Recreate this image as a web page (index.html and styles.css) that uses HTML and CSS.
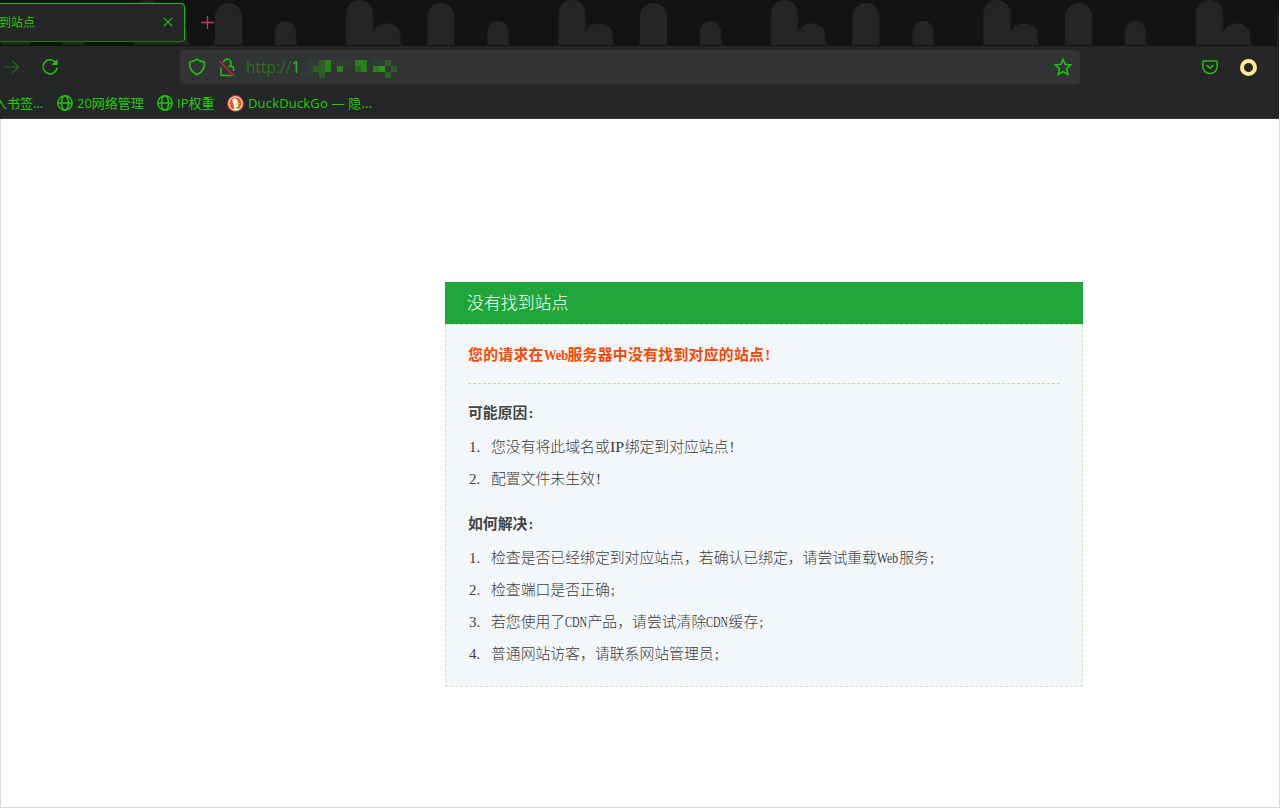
FILE: index.html
```html
<!DOCTYPE html>
<html lang="zh-CN">
<head>
    <meta charset="UTF-8">
    <title>没有找到站点</title>
    <link rel="stylesheet" href="styles.css">
</head>
<body>
    <div class="browser">
        <div class="tabs">
            <svg class="skyline" width="1279" height="46">
                <defs>
                    <pattern id="hills" x="210" width="212.5" height="46" patternUnits="userSpaceOnUse">
                        <path d="M4 45 Q5 43 5 38 V17 a13.5 14 0 0 1 27 0 V45z M65 45 V32 a10.5 11 0 0 1 21 0 V38 Q86 43 87 45z M136 45 V14 a13.5 14 0 0 1 27 0 V33 a13.5 11 0 0 1 27 3 Q190 42 192 45z"/>
                    </pattern>
                </defs>
                <rect width="1279" height="46" fill="url(#hills)"/>
            </svg>
            <div class="tab">
                <span class="tab-title">到站点</span>
                <svg width="10" height="10" viewBox="0 0 10 10"><path d="M.8.8l8.400 8.400M9.200.8L.8 9.200"/></svg>
            </div>
            <svg class="new-tab" width="13" height="13" viewBox="0 0 13 13"><path d="M6.500 0v13M0 6.500h13"/></svg>
        </div>

        <div class="toolbar">
            <svg class="forward" width="18" height="16" viewBox="0 0 18 16"><path d="M1 8h15M9.500 2l6 6-6 6"/></svg>
            <svg class="reload" width="18" height="18" viewBox="0 0 18 18"><path d="M14.500 4.500A7 7 0 1 0 16 9.500"/><path class="solid" d="M16.500 1v6h-6z"/></svg>
            <div class="urlbar">
                <svg width="18" height="18" viewBox="0 0 18 18"><path d="M9 1.200Q12 3.500 16.500 4.200Q17 13 9 16.800Q1 13 1.500 4.200Q6 3.500 9 1.200z"/></svg>
                <svg class="lock" width="18" height="19" viewBox="0 0 18 19"><path d="M5.500 4.500a3.700 3.500 0 0 1 7.400 0.500v3.500M10 8.500h4q1.500 0 1.500 1.500v3M3 9.500v6.500q0 1.500 1.500 1.500h9"/><path class="strike" d="M1.500 3l14.500 15"/></svg>
                <span class="url">http://<b>1</b></span>
                <svg class="mosaic" width="102" height="18" viewBox="0 0 102 18">
                    <path fill="#323c32" d="M6 0h12v6H6z M6 6h6v6H6z M0 12h12v6H0z M30 0h24v6H30z M72 0h12v6H72z"/>
                    <path fill="#2c6024" d="M18 0h6v6h-6z M12 6h12v6H12z M18 12h6v6h-6z M54 6h6v6h-6z M84 0h6v6h-6z M90 6h6v6h-6z M84 12h6v6h-6z"/>
                    <path fill="#29801c" d="M24 0h6v12h-6z M36 6h6v6h-6z M54 0h12v6H54z M60 6h6v6h-6z M72 6h6v6h-6z"/>
                    <path fill="#249b17" d="M78 6h6v6h-6z"/>
                </svg>
                <svg class="star" width="18" height="18" viewBox="0 0 18 18"><path d="M9 1.200l2.200 5 5.600.6-4.200 3.800 1.200 5.900L9 13.700l-4.800 2.800 1.200-5.900L1.200 6.800l5.600-.6z"/></svg>
            </div>
            <svg class="pocket" width="16" height="15" viewBox="0 0 16 15"><path d="M2 1h12q1.200 0 1.200 1.200V6.500a7.200 7 0 0 1-14.400 0V2.200Q.8 1 2 1zM4.500 5L8 8.300 11.500 5"/></svg>
            <span class="ring"></span>
        </div>

        <div class="bookmarks">
            <span class="bookmark clipped">入书签...</span>
            <span class="bookmark globe-item">
                <svg width="16" height="16" viewBox="0 0 16 16"><circle cx="8" cy="8" r="7.200"/><ellipse cx="8" cy="8" rx="3.500" ry="7.200"/><path d="M1 8h14"/></svg>
                20网络管理
            </span>
            <span class="bookmark globe-item">
                <svg width="16" height="16" viewBox="0 0 16 16"><circle cx="8" cy="8" r="7.200"/><ellipse cx="8" cy="8" rx="3.500" ry="7.200"/><path d="M1 8h14"/></svg>
                IP权重
            </span>
            <span class="bookmark duck-item">
                <svg class="duck" width="17" height="17" viewBox="0 0 17 17">
                    <circle cx="8.500" cy="8.500" r="8.300" fill="#de5833"/>
                    <circle cx="8.500" cy="8.500" r="6.600" fill="#de5833" stroke="#fff" stroke-width="1"/>
                    <path fill="#fff" d="M5.500 4Q9 2.500 10.500 5.500Q11 7 11 10L11.500 14.500Q9 15.500 7.500 14.500Q7 10 5.700 7z"/>
                    <path fill="#fdd20a" d="M9 8.300l4-.5-.5 1.500L9 10z"/>
                    <path fill="#65bc46" d="M8.500 12l4-1v3l-4-.7z"/>
                </svg>
                DuckDuckGo — 隐...
            </span>
        </div>
    </div>

    <div class="page">
        <div class="box">
            <h1>没有找到站点</h1>
            <div class="content">
                <p class="warning">您的请求在<span class="web">Web</span>服务器中没有找到对应的站点<span class="half">!</span></p>
                <h2>可能原因<span class="half">:</span></h2>
                <ol>
                    <li>您没有将此域名或<span class="ip">IP</span>绑定到对应站点<span class="half">!</span></li>
                    <li>配置文件未生效<span class="half">!</span></li>
                </ol>
                <h2>如何解决<span class="half">:</span></h2>
                <ol>
                    <li>检查是否已经绑定到对应站点，若确认已绑定，请尝试重载<span class="web">Web</span>服务<span class="half">;</span></li>
                    <li>检查端口是否正确<span class="half">;</span></li>
                    <li>若您使用了<span class="cdn">CDN</span>产品，请尝试清除<span class="cdn">CDN</span>缓存<span class="half">;</span></li>
                    <li>普通网站访客，请联系网站管理员<span class="half">;</span></li>
                </ol>
            </div>
        </div>
    </div>
</body>
</html>
```
FILE: styles.css
```css
* {
    box-sizing: border-box;
}
body {
    margin: 0;
    width: 1280px;
    height: 808px;
    overflow: hidden;
    display: flex;
    flex-direction: column;
    background-color: #fff;
    font-family: "Liberation Serif", "Noto Sans CJK SC", serif;
}
svg {
    display: block;
    flex: none;
    fill: none;
    stroke: #1fc60a;
    stroke-width: 1.5;
}
.browser {
    width: 1279px;
    height: 119px;
    background-color: #252628;
    border-bottom: 1px solid #3b3a3c;
    color: #1fd100;
    font-family: "Open Sans", "Noto Sans CJK SC", sans-serif;
    font-size: 13px;
}
.tabs {
    position: relative;
    display: flex;
    height: 46px;
    background-color: #131313;
}
.skyline {
    position: absolute;
    left: 0;
    top: 0;
    stroke: none;
}
.skyline path {
    fill: #252525;
}
.tab {
    position: relative;
    display: flex;
    align-items: center;
    justify-content: space-between;
    width: 186px;
    height: 39px;
    margin: 3px 0 0 -1px;
    padding: 0 11px 2px 0;
    background-color: #252628;
    border: 1px solid #1fb80a;
    border-bottom: 1px solid #1c7d12;
    border-radius: 0 4px 4px 0;
}
.tab svg {
    stroke-width: 1.2;
}
.tab-title {
    margin-left: -1px;
    font-size: 12px;
}
.new-tab {
    position: relative;
    margin: 16px 0 0 16px;
    stroke: #e8275f;
    stroke-width: 1.3;
}
.toolbar {
    display: flex;
    align-items: center;
    height: 42px;
}
.forward {
    margin-left: 3px;
    stroke: #236d1c;
    stroke-width: 1.2;
}
.reload {
    margin-left: 20px;
}
.reload .solid {
    fill: #1fc60a;
    stroke: none;
}
.urlbar {
    display: flex;
    align-items: center;
    width: 900px;
    height: 34px;
    margin-left: 121px;
    padding: 0 8px;
    background-color: #333436;
    border-radius: 4px;
}
.lock {
    margin-left: 12px;
}
.lock .strike {
    stroke: #d81848;
}
.url {
    margin-left: 10px;
    color: #28761d;
    font-size: 15.5px;
}
.url b {
    color: #1fd100;
    font-weight: 400;
}
.mosaic {
    margin-left: 1px;
    margin-top: 4px;
    stroke: none;
}
.star {
    margin-left: auto;
}
.pocket {
    margin-left: 122px;
}
.ring {
    width: 17px;
    height: 17px;
    margin-left: 22px;
    border: 4px solid #ffeb93;
    border-radius: 50%;
}
.bookmarks {
    display: flex;
    align-items: center;
    height: 29px;
}
.bookmark {
    display: flex;
    align-items: center;
    gap: 4px;
    white-space: nowrap;
}
.bookmark svg {
    margin-top: 1px;
}
.clipped {
    width: 57px;
    margin-left: -6px;
    margin-right: 6px;
}
.globe-item {
    width: 100px;
}
.globe-item + .globe-item {
    width: 70px;
}
.duck-item {
    letter-spacing: .18px;
}
.duck {
    stroke: none;
}
.page {
    flex: 1;
    padding: 163px 0 0 444px;
    border: 1px solid #d8d8d8;
    border-top: 0;
}
.box {
    width: 638px;
    height: 406px;
    color: #3c3c3c;
    font-size: 14.85px;
    font-weight: 300;
}
h1 {
    height: 42px;
    margin: 0;
    padding-left: 22px;
    background-color: #20a53a;
    color: #fff;
    font-size: 16.9px;
    font-weight: 300;
    line-height: 44px;
}
.content {
    height: 363px;
    padding: 15px 22px 0;
    background-color: #f3f7fa;
    border: 1px dashed #d3e2cc;
}
.warning {
    height: 44px;
    margin: 0;
    border-bottom: 1px dashed #cbd9b8;
    color: #ff4500;
    font-weight: 700;
    letter-spacing: .29px;
    line-height: 30px;
}
h2 {
    margin: 14px 0 0;
    color: #444;
    font-size: 14.85px;
    font-weight: 700;
    line-height: 30px;
}
ol {
    margin: 4px 0 0;
    padding-left: 23px;
    list-style: none;
    counter-reset: row;
}
li {
    line-height: 31.7px;
    white-space: nowrap;
}
li::before {
    content: counter(row) ".";
    counter-increment: row;
    display: inline-block;
    width: 22px;
    margin-left: -22px;
}
/* half-width latin, squeezed to the CJK grid */
.web, .cdn, .ip {
    display: inline-block;
    width: 22.3px;
    letter-spacing: 0;
    transform-origin: 0 0;
}
.web {
    transform: scaleX(.78);
}
.warning .web {
    width: 23.8px;
    transform: scaleX(.84);
}
.cdn {
    transform: scaleX(.7);
}
.ip {
    width: 14.9px;
    transform: scaleX(1.08);
}
.half {
    display: inline-block;
    width: 7.4px;
    padding-left: 1px;
}
```
